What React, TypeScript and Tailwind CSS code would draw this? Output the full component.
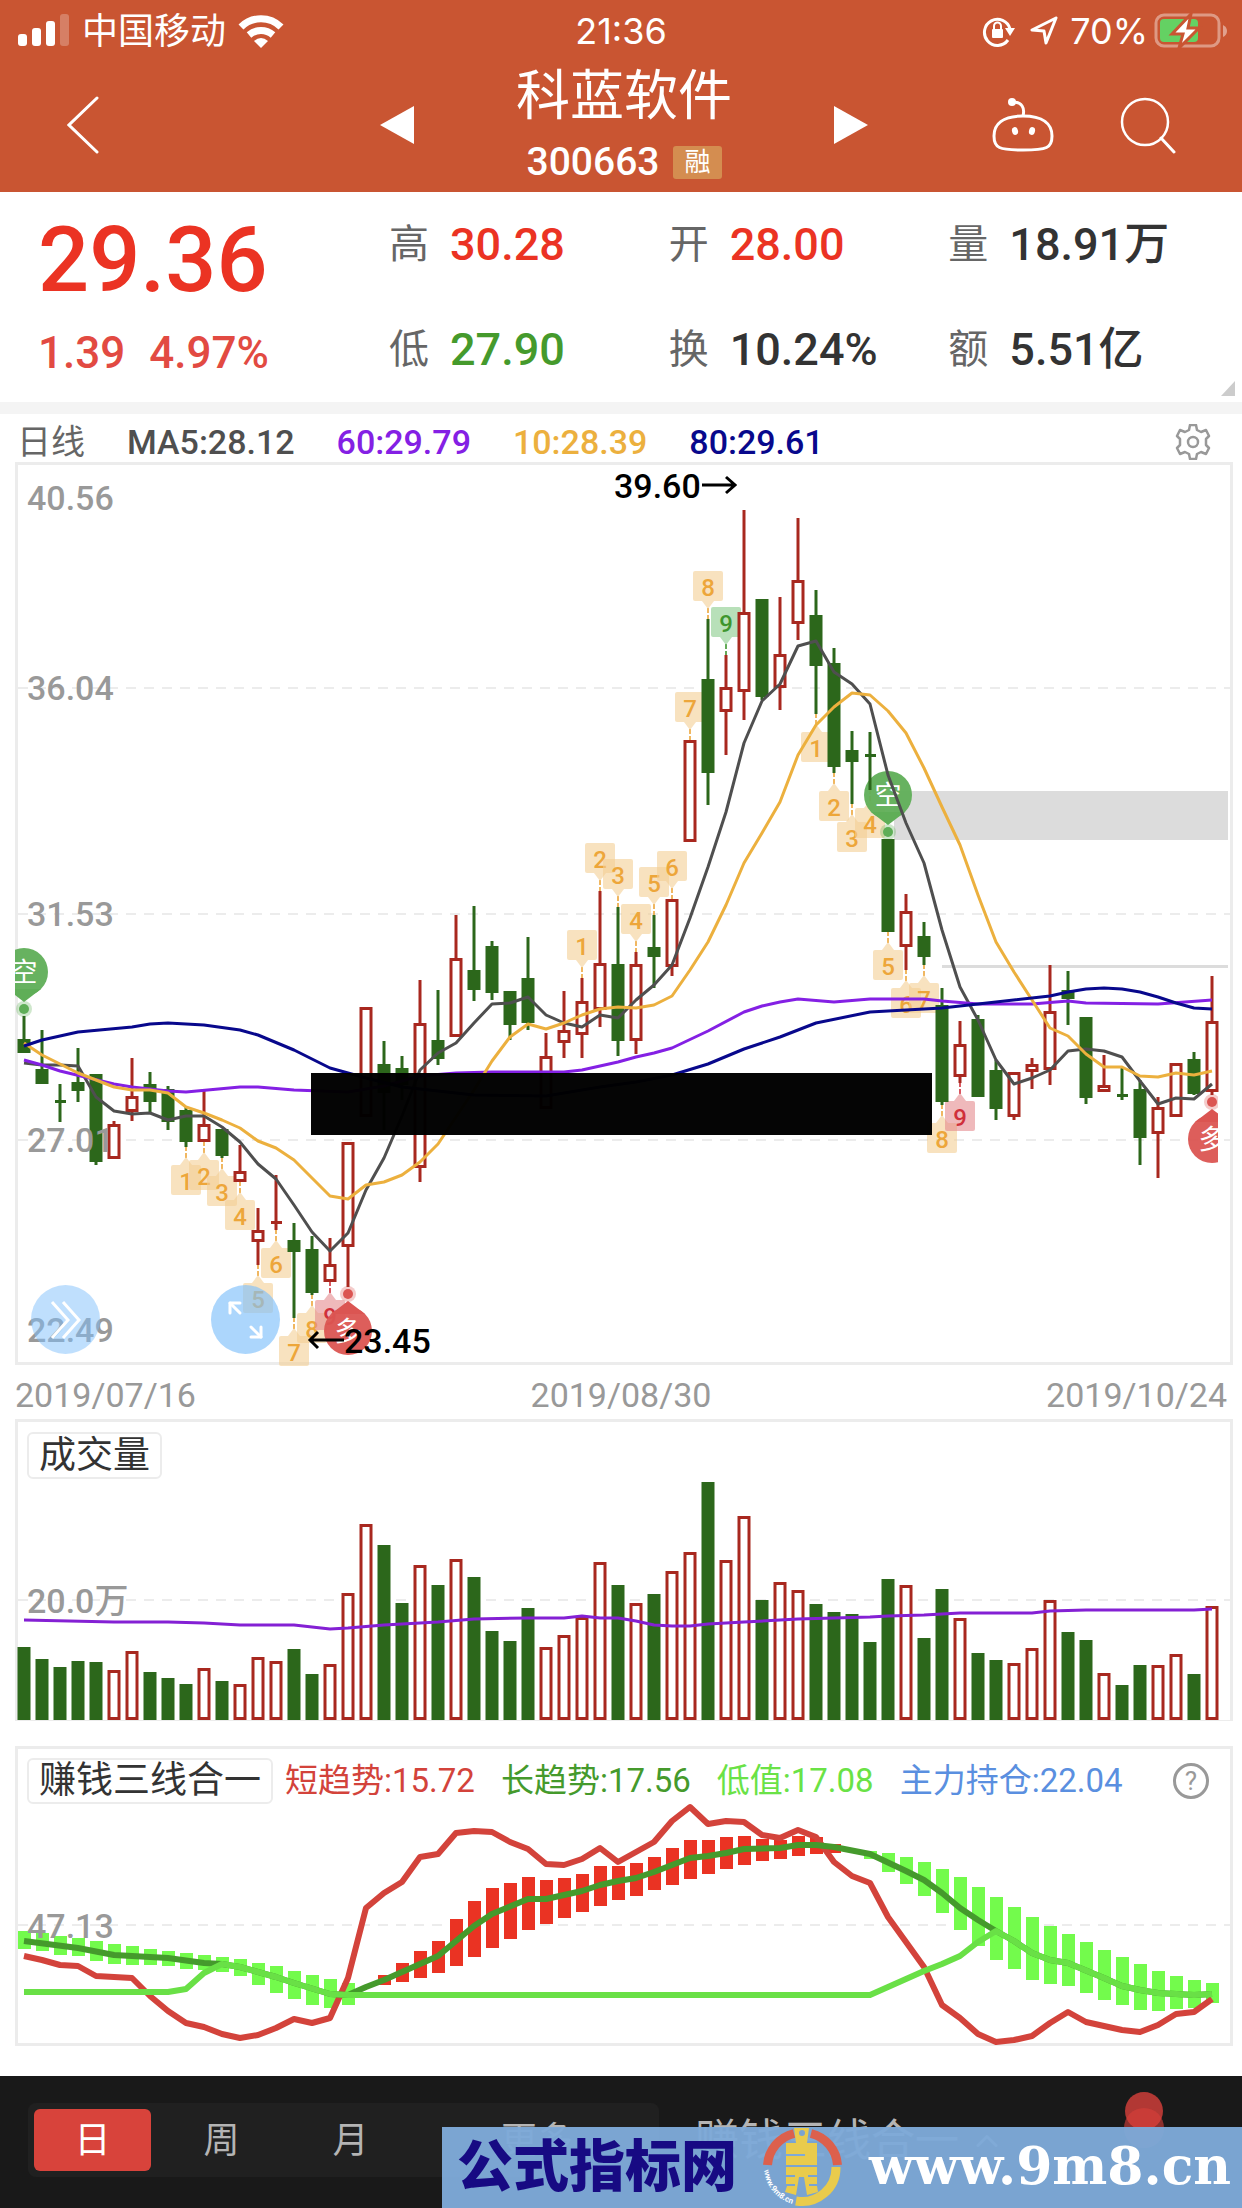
import { ArrowUpLeft, ArrowDownRight, ChevronUp } from 'lucide-react';

type Candle = [number, number, number, number, 0 | 1];
type Point = [number, number];

const RED = '#a8281f';
const GREEN = '#2c671b';
const STEP = 18;
const FIRST_X = 24;

const cx = (i: number) => FIRST_X + i * STEP;

// high, body top, body bottom, low, rising
const candles: Candle[] = [
  [1016, 1039, 1053, 1053, 0], [1030, 1069, 1084, 1084, 0], [1084, 1100, 1103, 1122, 0],
  [1048, 1082, 1091, 1102, 0], [1074, 1074, 1162, 1165, 0], [1121, 1124, 1159, 1159, 1],
  [1058, 1096, 1112, 1121, 1], [1072, 1084, 1102, 1112, 0], [1086, 1089, 1122, 1130, 0],
  [1107, 1110, 1142, 1147, 0], [1091, 1124, 1142, 1142, 1], [1129, 1129, 1156, 1158, 0],
  [1145, 1171, 1182, 1182, 1], [1208, 1230, 1242, 1265, 1], [1175, 1221, 1224, 1230, 1],
  [1223, 1240, 1252, 1318, 0], [1236, 1249, 1293, 1295, 0], [1238, 1264, 1282, 1282, 1],
  [1142, 1142, 1247, 1287, 1], [1007, 1007, 1117, 1117, 1], [1041, 1064, 1093, 1130, 0],
  [1056, 1068, 1085, 1100, 0], [980, 1023, 1168, 1182, 1], [990, 1040, 1059, 1065, 0],
  [915, 958, 1037, 1037, 1], [906, 970, 990, 1001, 0], [941, 946, 993, 1000, 0],
  [991, 991, 1025, 1040, 0], [937, 978, 1023, 1030, 0], [1033, 1056, 1109, 1109, 1],
  [991, 1030, 1043, 1058, 1], [978, 1001, 1035, 1058, 1], [891, 963, 1010, 1027, 1],
  [907, 964, 1041, 1056, 0], [952, 964, 1041, 1054, 1], [915, 947, 957, 988, 0],
  [899, 899, 967, 976, 1], [740, 740, 842, 842, 1], [619, 679, 773, 805, 0],
  [655, 687, 712, 755, 1], [510, 612, 692, 720, 1], [599, 599, 697, 700, 0],
  [597, 654, 688, 710, 1], [518, 580, 624, 640, 1], [590, 615, 666, 714, 0],
  [648, 663, 767, 773, 0], [731, 750, 762, 804, 0], [732, 754, 757, 790, 0],
  [839, 839, 932, 932, 0], [894, 911, 947, 970, 1], [922, 936, 957, 965, 0],
  [988, 1005, 1102, 1105, 0], [1021, 1044, 1077, 1083, 1], [1015, 1019, 1097, 1097, 0],
  [1060, 1070, 1109, 1120, 0], [1072, 1072, 1117, 1120, 1], [1058, 1064, 1072, 1089, 1],
  [965, 1011, 1070, 1085, 1], [971, 990, 999, 1025, 0], [1017, 1017, 1098, 1104, 0],
  [1055, 1085, 1092, 1092, 1], [1068, 1094, 1097, 1100, 0], [1080, 1089, 1138, 1165, 0],
  [1097, 1107, 1134, 1178, 1], [1063, 1063, 1117, 1117, 1], [1052, 1059, 1094, 1095, 0],
  [976, 1021, 1092, 1095, 1],
];

const volumeTops = [
  1647, 1659, 1667, 1661, 1662, 1670, 1651, 1672, 1678, 1684, 1668, 1681, 1684, 1657, 1661, 1649,
  1674, 1664, 1593, 1524, 1545, 1603, 1565, 1585, 1559, 1577, 1631, 1641, 1608, 1647, 1635, 1617,
  1562, 1585, 1603, 1594, 1571, 1552, 1482, 1560, 1516, 1600, 1582, 1590, 1604, 1612, 1614, 1642,
  1579, 1585, 1638, 1589, 1618, 1653, 1660, 1663, 1648, 1600, 1632, 1640, 1673, 1685, 1665, 1665,
  1654, 1674, 1606,
];

const ma5 = [
  1063, 1065, 1065, 1066, 1097, 1111, 1114, 1113, 1120, 1116, 1116, 1127, 1142, 1164, 1179, 1205,
  1232, 1251, 1233, 1190, 1158, 1116, 1070, 1053, 1043, 1023, 1004, 1003, 997, 1015, 1023, 1027,
  1015, 1018, 1000, 985, 965, 918, 867, 812, 743, 701, 684, 646, 641, 672, 684, 704, 775, 823, 863,
  930, 987, 1020, 1060, 1084, 1078, 1070, 1051, 1049, 1051, 1057, 1081, 1104, 1098, 1099, 1084,
];

const ma10 = [
  1043, 1055, 1064, 1073, 1080, 1087, 1090, 1090, 1093, 1107, 1113, 1120, 1128, 1141, 1148, 1160,
  1178, 1196, 1199, 1185, 1182, 1175, 1162, 1144, 1117, 1090, 1061, 1037, 1024, 1029, 1023, 1015,
  1009, 1007, 1008, 1005, 996, 970, 942, 905, 863, 833, 802, 755, 725, 707, 693, 695, 711, 733,
  768, 807, 845, 895, 942, 972, 1000, 1028, 1036, 1054, 1067, 1067, 1076, 1077, 1073, 1075, 1071,
];

const ma60: Point[] = [
  [0, 1060], [1, 1065], [2, 1071], [5, 1084], [6, 1087], [8, 1091], [9, 1092], [12, 1087],
  [13, 1087], [15, 1090], [18, 1092], [20, 1086], [22, 1076], [24, 1073], [26, 1072], [30, 1072],
  [31, 1070], [32, 1066], [33, 1062], [34, 1057], [35, 1053], [36, 1048], [38, 1031], [40, 1012],
  [41, 1006], [42, 1002], [43, 999], [45, 1002], [47, 999], [50, 999], [51, 1001], [53, 1004],
  [56, 1004], [58, 1001], [59, 1003], [63, 1004], [66, 1000],
];

const ma80: Point[] = [
  [0, 1046], [1, 1040], [3, 1032], [6, 1027], [7, 1024], [8, 1023], [10, 1025], [12, 1030],
  [13, 1035], [15, 1050], [17, 1068], [19, 1078], [21, 1087], [25, 1095], [29, 1096], [32, 1087],
  [34, 1082], [36, 1075], [38, 1064], [40, 1049], [42, 1037], [44, 1023], [47, 1012], [51, 1008],
  [53, 1004], [57, 996], [58, 992], [59, 989], [60, 988], [61, 989], [62, 992], [63, 997],
  [64, 1003], [65, 1008], [66, 1009],
];

const volumeMa: Point[] = [
  [0, 1620], [5, 1622], [8, 1622], [10, 1623], [12, 1625], [15, 1625], [16, 1627], [17, 1629],
  [18, 1628], [20, 1625], [23, 1622], [25, 1619], [28, 1618], [30, 1618], [31, 1616], [32, 1618],
  [33, 1618], [34, 1621], [35, 1625], [36, 1626], [37, 1626], [38, 1624], [40, 1622], [43, 1619],
  [47, 1617], [48, 1616], [50, 1615], [52, 1613], [56, 1613], [57, 1611], [59, 1610], [65, 1610],
  [66, 1609],
];

const shortTrend = [
  1956, 1960, 1965, 1966, 1976, 1977, 1978, 1996, 2011, 2023, 2027, 2034, 2038, 2035, 2028, 2019,
  2023, 2018, 1978, 1908, 1893, 1882, 1857, 1854, 1833, 1831, 1832, 1842, 1849, 1864, 1865, 1859,
  1848, 1862, 1852, 1842, 1821, 1807, 1824, 1821, 1822, 1835, 1838, 1830, 1837, 1862, 1876, 1883,
  1917, 1942, 1967, 2005, 2018, 2034, 2042, 2040, 2036, 2023, 2012, 2022, 2026, 2030, 2032, 2025,
  2014, 2012, 1999,
];

const tail: Point[] = [
  [54, 1931], [55, 1941], [56, 1953], [57, 1960], [58, 1963], [60, 1978], [61, 1986], [62, 1990],
  [63, 1993], [65, 1995], [66, 1994],
];

const longTrend: Point[] = [
  [0, 1941], [3, 1948], [5, 1955], [8, 1958], [10, 1963], [11, 1964], [12, 1967], [14, 1977],
  [15, 1983], [17, 1994], [18, 1995], [19, 1987], [20, 1980], [21, 1972], [23, 1956], [25, 1926],
  [26, 1914], [28, 1899], [29, 1899], [30, 1895], [31, 1891], [32, 1885], [33, 1881], [34, 1878],
  [35, 1872], [36, 1865], [37, 1858], [38, 1856], [39, 1853], [40, 1849], [42, 1848], [43, 1845],
  [44, 1845], [45, 1847], [47, 1854], [49, 1871], [50, 1880], [51, 1893], [52, 1908], [53, 1920],
  ...tail,
];

const lowValue: Point[] = [
  [0, 1992], [8, 1992], [9, 1989], [10, 1973], [11, 1964], [12, 1967], [14, 1977], [15, 1983],
  [17, 1994], [18, 1995], [47, 1995], [48, 1987], [49, 1979], [50, 1971], [51, 1964], [52, 1956],
  [53, 1942], ...tail,
];

// index, top, bottom
const weakBars: [number, number, number][] = [
  [0, 1931, 1949], [1, 1933, 1951], [2, 1936, 1955], [3, 1938, 1956], [4, 1941, 1961],
  [5, 1944, 1964], [6, 1946, 1965], [7, 1949, 1965], [8, 1951, 1966], [9, 1953, 1969],
  [10, 1955, 1970], [11, 1957, 1972], [12, 1959, 1976], [13, 1963, 1985], [14, 1966, 1993],
  [15, 1971, 1999], [16, 1975, 2005], [17, 1979, 2008], [18, 1983, 2005], [47, 1851, 1859],
  [48, 1853, 1872], [49, 1857, 1884], [50, 1862, 1896], [51, 1869, 1913], [52, 1877, 1930],
  [53, 1887, 1946], [54, 1897, 1960], [55, 1907, 1969], [56, 1917, 1980], [57, 1926, 1984],
  [58, 1934, 1986], [59, 1942, 1993], [60, 1950, 2000], [61, 1957, 2005], [62, 1964, 2010],
  [63, 1971, 2011], [64, 1976, 2009], [65, 1980, 2008], [66, 1983, 2003],
];

const strongBars: [number, number, number][] = [
  [20, 1975, 1985], [21, 1963, 1982], [22, 1951, 1978], [23, 1941, 1973], [24, 1919, 1966],
  [25, 1901, 1957], [26, 1888, 1948], [27, 1883, 1939], [28, 1877, 1930], [29, 1880, 1924],
  [30, 1878, 1918], [31, 1874, 1912], [32, 1866, 1906], [33, 1866, 1900], [34, 1863, 1896],
  [35, 1857, 1890], [36, 1848, 1885], [37, 1840, 1879], [38, 1840, 1874], [39, 1837, 1869],
  [40, 1836, 1865], [41, 1839, 1861], [42, 1840, 1859], [43, 1836, 1856], [44, 1837, 1854],
  [45, 1844, 1853],
];

// nine-turn markers: candle index, digit
const marksBelow: Point[] = [
  [9, 1], [10, 2], [11, 3], [12, 4], [13, 5], [14, 6], [15, 7], [16, 8], [17, 9],
  [44, 1], [45, 2], [46, 3], [47, 4], [48, 5], [49, 6], [50, 7], [51, 8], [52, 9],
];
const marksAbove: Point[] = [
  [31, 1], [32, 2], [33, 3], [34, 4], [35, 5], [36, 6], [37, 7], [38, 8], [39, 9],
];

const toPoints = (pts: Point[]) => pts.map(([i, y]) => `${cx(i)},${y}`).join(' ');
const dense = (ys: number[]) => toPoints(ys.map((y, i) => [i, y]));

const stats = [
  { label: '高', value: '30.28', color: 'text-[#eb3323]' },
  { label: '开', value: '28.00', color: 'text-[#eb3323]' },
  { label: '量', value: '18.91万', color: 'text-[#333333]' },
  { label: '低', value: '27.90', color: 'text-[#459a2c]' },
  { label: '换', value: '10.24%', color: 'text-[#333333]' },
  { label: '额', value: '5.51亿', color: 'text-[#333333]' },
];

const averages = [
  { text: 'MA5:28.12', color: 'text-[#4f4f4f]' },
  { text: '60:29.79', color: 'text-[#8420e4]' },
  { text: '10:28.39', color: 'text-[#ecb03e]' },
  { text: '80:29.61', color: 'text-[#08088c]' },
];

const legends = [
  { text: '短趋势:15.72', color: 'text-[#d3433b]' },
  { text: '长趋势:17.56', color: 'text-[#459a2c]' },
  { text: '低值:17.08', color: 'text-[#6ae246]' },
  { text: '主力持仓:22.04', color: 'text-[#5a8fe0]' },
];

function Line({ points, color, width = 3 }: { points: string; color: string; width?: number }) {
  return <polyline points={points} fill="none" stroke={color} strokeWidth={width} strokeLinejoin="round" />;
}

function Grid({ y }: { y: number }) {
  return <path d={`M18 ${y}H1230`} stroke="#ececec" strokeWidth="2" strokeDasharray="10 8" />;
}

function AxisLabel({ y, children }: { y: number; children: string }) {
  return <text x="27" y={y} fontSize="34" fontWeight="500" fill="#999999">{children}</text>;
}

function Bar({ i, top, bottom, up }: { i: number; top: number; bottom: number; up: boolean }) {
  const x = cx(i);
  if (bottom - top < 4) {
    return <rect x={x - 5} y={top} width="11" height={bottom - top} fill={up ? RED : GREEN} />;
  }
  if (!up) {
    return <rect x={x - 6.5} y={top} width="13" height={bottom - top} fill={GREEN} />;
  }
  return (
    <rect x={x - 5} y={top + 1.5} width="10" height={bottom - top - 3} fill="#fff" stroke={RED} strokeWidth="3" />
  );
}

function Mark({ i, digit, above }: { i: number; digit: number; above: boolean }) {
  const x = cx(i);
  const [high, , , low] = candles[i];
  const top = above ? high - 48 : low + 18;
  const dir = above ? 1 : -1;
  const edge = above ? top + 30 : top;
  let fill = '#f3cf94';
  let ink = '#eda63a';
  if (digit === 9) {
    fill = above ? '#89cb8a' : '#e58a8d';
    ink = above ? '#3f962f' : '#d02f3a';
  }

  return (
    <g>
      <path d={`M${x} ${edge + dir * 7}V${above ? high : low}`} stroke={ink} strokeWidth="2" strokeDasharray="5 2" opacity="0.8" />
      <rect x={x - 15} y={top} width="30" height="30" rx="2" fill={fill} opacity="0.6" />
      <path d={`M${x - 6} ${edge}h12l-6 ${dir * 8}z`} fill={fill} opacity="0.6" />
      <text x={x} y={top + 25} fontSize="24" fontWeight="500" textAnchor="middle" fill={ink}>{digit}</text>
    </g>
  );
}

function Pin({ i, label, up }: { i: number; label: string; up: boolean }) {
  const x = cx(i);
  const [high, , , low] = candles[i];
  const dot = up ? high - 7 : low + 7;
  const cy = up ? dot - 37 : dot + 37;
  const tip = up ? cy + 30 : cy - 30;
  const side = up ? cy + 17 : cy - 17;
  const color = up ? '#5fae57' : '#db5552';

  return (
    <g fill={color}>
      <circle cx={x} cy={dot} r="8" opacity="0.3" />
      <circle cx={x} cy={dot} r="5" />
      <circle cx={x} cy={cy} r="24" opacity="0.95" />
      <path d={`M${x - 17} ${side}L${x} ${tip}L${x + 17} ${side}z`} />
      <text x={x} y={cy + 10} fontSize="27" textAnchor="middle" fill="#fff">{label}</text>
    </g>
  );
}

function PriceChart() {
  return (
    <svg viewBox="18 465 1212 897" className="block h-auto w-full overflow-visible">
      <defs>
        <clipPath id="plot">
          <rect x="15" y="465" width="1203" height="897" />
        </clipPath>
      </defs>
      <Grid y={688} />
      <Grid y={914} />
      <Grid y={1140} />
      <rect x="894" y="791" width="334" height="49" fill="#dcdcdc" />
      <rect x="942" y="965" width="286" height="3" fill="#dcdcdc" />

      {marksBelow.map(([i, n]) => <Mark key={i} i={i} digit={n} above={false} />)}
      {marksAbove.map(([i, n]) => <Mark key={i} i={i} digit={n} above />)}

      <g clipPath="url(#plot)">
        <Pin i={0} label="空" up />
        <Pin i={48} label="空" up />
        <Pin i={18} label="多" up={false} />
        <Pin i={66} label="多" up={false} />
      </g>

      {candles.map(([high, top, bottom, low, up], i) => (
        <g key={i}>
          <path d={`M${cx(i)} ${high}V${low}`} stroke={up ? RED : GREEN} strokeWidth="3" />
          <Bar i={i} top={top} bottom={bottom} up={up === 1} />
        </g>
      ))}

      <AxisLabel y={510}>40.56</AxisLabel>
      <AxisLabel y={700}>36.04</AxisLabel>
      <AxisLabel y={926}>31.53</AxisLabel>
      <AxisLabel y={1152}>27.01</AxisLabel>
      <AxisLabel y={1342}>22.49</AxisLabel>

      <Line points={dense(ma5)} color="#4f4f4f" />
      <Line points={toPoints(ma60)} color="#8420e4" />
      <Line points={dense(ma10)} color="#ecb03e" />
      <Line points={toPoints(ma80)} color="#08088c" />

      <rect x="311" y="1073" width="621" height="62" fill="#000" opacity="0.98" />

      <text x="614" y="498" fontSize="34" fontWeight="500" fill="#000">39.60</text>
      <path d="M702 485H734M726 477L735 485L726 493" fill="none" stroke="#000" strokeWidth="3" />
      <text x="344" y="1353" fontSize="34" fontWeight="500" fill="#000">23.45</text>
      <path d="M344 1340H311M318 1332L310 1340L318 1348" fill="none" stroke="#000" strokeWidth="3" />
    </svg>
  );
}

function VolumeChart() {
  return (
    <svg viewBox="18 1479 1212 241" className="block h-auto w-full overflow-visible">
      <Grid y={1600} />
      <AxisLabel y={1613}>20.0万</AxisLabel>
      {volumeTops.map((top, i) => (
        <Bar key={i} i={i} top={top} bottom={1720} up={candles[i][4] === 1} />
      ))}
      <Line points={toPoints(volumeMa)} color="#8420d4" />
    </svg>
  );
}

function TrendChart() {
  return (
    <svg viewBox="18 1804 1212 239" className="block h-auto w-full overflow-visible">
      <Grid y={1925} />
      {weakBars.map(([i, top, bottom]) => (
        <rect key={i} x={cx(i) - 6} y={top} width="13" height={bottom - top} fill="#73fb4c" />
      ))}
      <AxisLabel y={1938}>47.13</AxisLabel>
      {strongBars.map(([i, top, bottom]) => (
        <rect key={i} x={cx(i) - 6} y={top} width="13" height={bottom - top} fill="#ea3323" />
      ))}
      <Line points={dense(shortTrend)} color="#d3433b" width={6} />
      <Line points={toPoints(longTrend)} color="#459a2c" width={6} />
      <Line points={toPoints(lowValue)} color="#69e046" width={6} />
    </svg>
  );
}

function StatusBar() {
  return (
    <div className="grid h-[58px] grid-cols-[1fr_auto_1fr] items-center px-[14px] text-[36px] leading-[58px]">
      <div className="flex items-center gap-[12px] pl-[4px]">
        <svg viewBox="0 0 52 33" className="h-[33px] w-[52px]" fill="#fff">
          <rect x="0" y="20" width="9" height="12" rx="3" />
          <rect x="14" y="14" width="9" height="18" rx="3" />
          <rect x="28" y="7" width="9" height="25" rx="3" />
          <rect x="42" y="0" width="9" height="32" rx="3" opacity="0.25" />
        </svg>
        <span className="pt-[3px]">中国移动</span>
        <svg viewBox="0 0 46 34" className="h-[34px] w-[46px]" fill="none" stroke="#fff" strokeWidth="7">
          <path d="M3 13C14 2 32 2 43 13" />
          <path d="M11 21C18 15 28 15 35 21" />
          <path d="M23 34L16 27Q23 21 30 27Z" fill="#fff" stroke="none" />
        </svg>
      </div>
      <span className="font-['Inter','Roboto',sans-serif]">21:36</span>
      <div className="flex items-center justify-end gap-[6px]">
        <svg viewBox="0 0 34 32" className="mr-[8px] h-[32px] w-[34px]" fill="none" stroke="#fff" strokeWidth="3">
          <path d="M26 25A13 13 0 1 1 28 14" />
          <path d="M23 13H33L28 21Z" fill="#fff" stroke="none" />
          <rect x="10" y="14" width="11" height="9" rx="1" fill="#fff" stroke="none" />
          <path d="M12 15V11a3 3 0 0 1 7 0V15" strokeWidth="2" />
        </svg>
        <svg viewBox="0 0 28 30" className="mr-[6px] h-[30px] w-[28px]" fill="none" stroke="#fff" strokeWidth="3" strokeLinejoin="round">
          <path d="M26 2L2 14L14 15L16 27Z" />
        </svg>
        <span className="font-['Inter','Roboto',sans-serif]">70%</span>
        <svg viewBox="0 0 74 36" className="h-[36px] w-[74px]">
          <rect x="2" y="2" width="63" height="31" rx="8" fill="none" stroke="#fff" strokeOpacity="0.4" strokeWidth="3" />
          <path d="M69 12Q73 14 73 18T69 24Z" fill="#fff" opacity="0.45" />
          <rect x="6" y="6" width="38" height="23" rx="4" fill="#64d163" />
          <path d="M37 1L18 21H29L25 35L45 15H34Z" fill="#fff" stroke="#c95532" strokeWidth="3" />
        </svg>
      </div>
    </div>
  );
}

function TitleBar() {
  return (
    <div className="grid h-[134px] grid-cols-[1fr_488px_1fr] items-center pl-[6px]">
      <button aria-label="返回" className="pl-[61px]">
        <svg viewBox="0 0 32 60" className="h-[60px] w-[32px]" fill="none" stroke="#fff" strokeWidth="3" strokeLinecap="round">
          <path d="M30 3L2 30L30 57" />
        </svg>
      </button>

      <div className="flex items-center justify-between">
        <button aria-label="上一只">
          <svg viewBox="0 0 34 38" className="h-[38px] w-[34px]" fill="#fff"><path d="M34 0V38L0 19Z" /></svg>
        </button>
        <div className="flex flex-col items-center gap-[10px]">
          <h1 className="text-[54px] leading-[64px]">科蓝软件</h1>
          <div className="flex h-[46px] items-center gap-[14px]">
            <span className="text-[39px] leading-[46px] font-medium">300663</span>
            <span className="rounded-[3px] bg-[#d48d50] px-[11px] text-[26px] leading-[33px]">融</span>
          </div>
        </div>
        <button aria-label="下一只">
          <svg viewBox="0 0 34 38" className="h-[38px] w-[34px]" fill="#fff"><path d="M0 0V38L34 19Z" /></svg>
        </button>
      </div>

      <div className="flex items-center justify-end gap-[66px] pr-[65px]">
        <button aria-label="智能助手">
          <svg viewBox="0 0 62 56" className="h-[56px] w-[62px]" fill="none" stroke="#fff" strokeWidth="3">
            <path d="M31 19C11 19 2 27 2 39C2 51 7 53 31 53S60 51 60 39C60 27 51 19 31 19Z" />
            <path d="M31 19C33 11 30 5 21 5" />
            <circle cx="20" cy="5" r="4" fill="#fff" stroke="none" />
            <ellipse cx="23" cy="34" rx="3" ry="4" fill="#fff" stroke="none" transform="rotate(-15 23 34)" />
            <ellipse cx="40" cy="34" rx="3" ry="4" fill="#fff" stroke="none" transform="rotate(15 40 34)" />
          </svg>
        </button>
        <button aria-label="搜索">
          <svg viewBox="0 0 57 57" className="h-[57px] w-[57px]" fill="none" stroke="#fff" strokeWidth="2.5" strokeLinecap="round">
            <circle cx="25" cy="25" r="23" />
            <path d="M41 41L54 55" strokeWidth="3" />
          </svg>
        </button>
      </div>
    </div>
  );
}

function Quote() {
  return (
    <section className="relative flex h-[210px]">
      <div className="w-[389px] pt-[9px] pl-[38px]">
        <div className="text-[90px] leading-[120px] font-medium text-[#eb3323]">29.36</div>
        <div className="flex gap-[24px] text-[44px] leading-[64px] font-medium text-[#e24a42]">
          <span>1.39</span>
          <span>4.97%</span>
        </div>
      </div>
      <dl className="grid flex-1 grid-cols-3 pr-[14px]">
        {stats.map((s) => (
          <div key={s.label} className="flex items-center gap-[21px] whitespace-nowrap">
            <dt className="text-[40px] leading-[64px] text-[#666666]">{s.label}</dt>
            <dd className={`text-[45px] leading-[64px] font-medium ${s.color}`}>{s.value}</dd>
          </div>
        ))}
      </dl>
      <svg viewBox="0 0 14 15" className="absolute right-[7px] bottom-[6px] h-[15px] w-[14px]" fill="#cccccc">
        <path d="M14 0V15H0Z" />
      </svg>
    </section>
  );
}

function Gear() {
  return (
    <svg viewBox="0 0 36 36" className="h-[36px] w-[36px]" fill="none" stroke="#999999" strokeWidth="2.5" strokeLinejoin="round">
      <path d="M15 1H21L22 6L26 8L31 6L34 12L31 15V21L34 24L31 30L26 28L22 30L21 35H15L14 30L10 28L5 30L2 24L5 21V15L2 12L5 6L10 8L14 6Z" />
      <circle cx="18" cy="18" r="5" />
    </svg>
  );
}

function Watermark() {
  return (
    <div className="absolute right-0 bottom-0 flex h-[81px] w-[800px] items-center bg-[#7ea9d8]/97 pl-[15px]">
      <span className="text-[56px] leading-[81px] font-black text-[#170a83]">公式指标网</span>
      <svg viewBox="0 0 79 79" className="ml-[26px] h-[79px] w-[79px] shrink-0">
        <path d="M4.500 37A35 35 0 0 1 31 5.500M48 5.500A35 35 0 0 1 74.500 37" fill="none" stroke="#dc604d" strokeWidth="9" />
        <path d="M73 39A34 34 0 0 1 33 73" fill="none" stroke="#e9cb4c" strokeWidth="9" />
        <g fill="#e9cb4c">
          <path fillRule="evenodd" d="M31 0H46L44 15H54V37H23V28H42V26H23V15H33ZM36 5a3 3 0 1 0 6 0a3 3 0 1 0 -6 0" />
          <path d="M23 39H54V47H45V49H54V56H46V58H54L55 64L44 67L41 49H36L33 67L22 64L24 58H32V56H23V49H32V47H23Z" />
        </g>
        <path id="ring" d="M1 42A39 39 0 0 0 30 76" fill="none" />
        <text fontSize="8" fontWeight="700" fill="#fff"><textPath href="#ring">www.9m8.cn</textPath></text>
      </svg>
      <a href="#" className="ml-[27px] pb-[4px] font-['DejaVu_Serif',serif] text-[52px] leading-[76px] font-bold text-white">www.9m8.cn</a>
    </div>
  );
}

export default function App() {
  return (
    <div className="min-h-screen bg-white font-['Roboto','Noto_Sans_CJK_SC',sans-serif]">
      <header className="bg-[#c95532] text-white">
        <StatusBar />
        <TitleBar />
      </header>

      <Quote />
      <div className="h-[12px] bg-[#f4f4f4]" />

      <main className="mr-[9px] ml-[15px]">
        <div className="flex h-[48px] items-center gap-[42px] pt-[8px] pr-[22px] pl-[2px] text-[34px] leading-[40px]">
          <span className="text-[#666666]">日线</span>
          {averages.map((a) => (
            <span key={a.text} className={`font-medium ${a.color}`}>{a.text}</span>
          ))}
          <button aria-label="设置" className="ml-auto"><Gear /></button>
        </div>

        <section className="relative border-[3px] border-[#ececec]">
          <PriceChart />
          <button
            aria-label="展开"
            className="absolute bottom-[8px] left-[13px] flex size-[69px] items-center justify-center rounded-full bg-[#7fc0fb]/50"
          >
            <svg viewBox="0 0 36 40" className="h-[40px] w-[36px]" fill="none" stroke="#fff" strokeWidth="3">
              <path d="M4 2L20 20L4 38M15 2L31 20L15 38" />
            </svg>
          </button>
          <button
            aria-label="全屏"
            className="absolute bottom-[8px] left-[193px] size-[69px] rounded-full bg-[#7fc0fb]/65 text-white"
          >
            <span className="flex flex-col px-[12px]">
              <ArrowUpLeft size={24} strokeWidth={3} />
              <ArrowDownRight size={24} strokeWidth={3} className="self-end" />
            </span>
          </button>
        </section>

        <div className="flex h-[54px] items-center justify-between pt-[6px] pr-[6px] text-[34px] leading-[42px] text-[#999999]">
          <span>2019/07/16</span>
          <span>2019/08/30</span>
          <span>2019/10/24</span>
        </div>

        <section className="border-[3px] border-b border-[#ececec]">
          <div className="flex px-[9px] pt-[10px]">
            <button className="h-[47px] rounded-md border-2 border-[#ececec] px-[10px] text-[37px] leading-[42px] text-[#333333]">
              成交量
            </button>
          </div>
          <VolumeChart />
        </section>

        <section className="mt-[25px] border-[3px] border-[#ececec]">
          <div className="flex items-center pt-[9px] pr-[21px] pl-[9px]">
            <button className="h-[46px] rounded-md border-2 border-[#ececec] px-[10px] text-[37px] leading-[42px] text-[#333333]">
              赚钱三线合一
            </button>
            <div className="ml-[12px] flex gap-[26px] text-[33px] leading-[42px] whitespace-nowrap">
              {legends.map((l) => (
                <span key={l.text} className={l.color}>{l.text}</span>
              ))}
            </div>
            <button
              aria-label="说明"
              className="ml-auto flex size-[36px] items-center justify-center rounded-full border-[3px] border-[#999999] text-[26px] leading-[30px] text-[#999999]"
            >
              ?
            </button>
          </div>
          <TrendChart />
        </section>
      </main>

      <footer className="relative mt-[30px] flex h-[132px] items-start overflow-hidden bg-[#191919] pt-[27px] pl-[28px]">
        <nav className="flex h-[74px] w-[631px] gap-[12px] rounded-lg bg-[#202020] p-[6px] text-[36px] leading-[64px] text-[#b4b4b4]">
          <button className="w-[117px] rounded-md bg-[#d8433b] text-white">日</button>
          <button className="w-[117px]">周</button>
          <button className="w-[117px]">月</button>
          <button className="flex-1">更多</button>
        </nav>
        <button className="ml-[36px] flex items-center gap-[10px] text-[44px] leading-[76px] text-[#b4b4b4]">
          赚钱三线合一
          <ChevronUp size={36} />
        </button>
        <svg viewBox="0 0 40 70" className="absolute top-[15px] right-[78px] h-[70px] w-[40px]" fill="#d8403b">
          <circle cx="20" cy="20" r="19" opacity="0.8" />
          <circle cx="20" cy="37" r="20" opacity="0.6" />
        </svg>
        <Watermark />
      </footer>
    </div>
  );
}
